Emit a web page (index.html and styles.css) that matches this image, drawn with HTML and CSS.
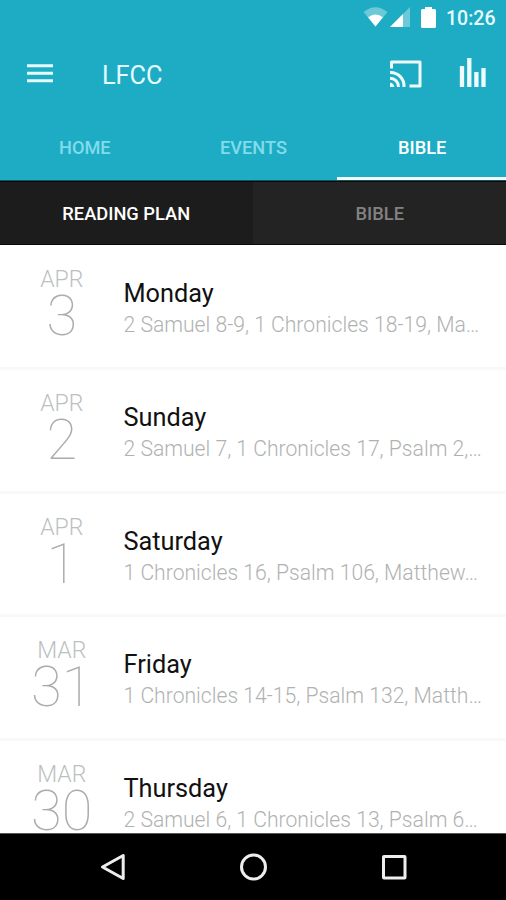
FILE: index.html
```html
<!DOCTYPE html>
<html lang="en">
<head>
<meta charset="utf-8">
<title>LFCC</title>
<link rel="stylesheet" href="styles.css">
</head>
<body>
<div class="screen">
  <header class="header">
    <div class="status">
      <svg class="wifi" width="25" height="20" viewBox="0 0 25 20"><path d="M.5 5Q12.5-4.500 24.500 5L12.500 19.500z" fill="#fff" opacity=".35"/><path d="M5 10.200Q12.500 5 20 10.200L12.500 19.500z" fill="#fff"/></svg>
      <svg class="signal" width="21" height="20" viewBox="0 0 21 20"><path d="M0 20L20 0V20z" fill="#fff" opacity=".35"/><path d="M0 20L13 7V20z" fill="#fff"/></svg>
      <svg class="battery" width="15" height="21" viewBox="0 0 15 21"><path d="M1.500 2H4V0h7v2h2.500q1.500 0 1.500 1.500v16q0 1.500-1.500 1.500h-12Q0 21 0 19.500v-16Q0 2 1.500 2z" fill="#fff"/></svg>
      <span class="clock">10:26</span>
    </div>
    <div class="toolbar">
      <svg class="menu" width="26" height="20" viewBox="0 0 26 20"><path d="M0 1.700h26M0 9.200h26M0 16.700h26" stroke="#e6fbff" stroke-width="3"/></svg>
      <h1 class="title">LFCC</h1>
      <svg class="cast" width="34" height="28" viewBox="0 0 34 28" fill="none" stroke="#effcff" stroke-width="3" stroke-linejoin="round"><path d="M2.500 8.500V2H31v24H20.500"/><path d="M1 12.500A13.500 13.500 0 0 1 15 27M1 18.200A8.500 8.500 0 0 1 9.500 27"/><path d="M1 22.700A4.300 4.300 0 0 1 5.300 27H1z" fill="#effcff" stroke="none"/></svg>
      <svg class="bars" width="28" height="30" viewBox="0 0 28 30"><path d="M3 8v21M10.300 0v29M17.400 14v15M24.500 10v19" stroke="#effcff" stroke-width="4.300"/></svg>
    </div>
    <nav class="tabs">
      <a class="tab">HOME</a>
      <a class="tab">EVENTS</a>
      <a class="tab tab-active">BIBLE</a>
    </nav>
  </header>
  <nav class="subtabs">
    <a class="subtab subtab-active">READING PLAN</a>
    <a class="subtab">BIBLE</a>
  </nav>
  <main class="list">
    <article class="row">
      <div class="date"><span class="month">APR</span><span class="num">3</span></div>
      <div class="info"><h2 class="day">Monday</h2><p class="text">2 Samuel 8-9, 1 Chronicles 18-19, Ma…</p></div>
    </article>
    <article class="row">
      <div class="date"><span class="month">APR</span><span class="num">2</span></div>
      <div class="info"><h2 class="day">Sunday</h2><p class="text">2 Samuel 7, 1 Chronicles 17, Psalm 2,…</p></div>
    </article>
    <article class="row">
      <div class="date"><span class="month">APR</span><span class="num">1</span></div>
      <div class="info"><h2 class="day">Saturday</h2><p class="text">1 Chronicles 16, Psalm 106, Matthew…</p></div>
    </article>
    <article class="row">
      <div class="date"><span class="month">MAR</span><span class="num">31</span></div>
      <div class="info"><h2 class="day">Friday</h2><p class="text">1 Chronicles 14-15, Psalm 132, Matth…</p></div>
    </article>
    <article class="row">
      <div class="date"><span class="month">MAR</span><span class="num">30</span></div>
      <div class="info"><h2 class="day">Thursday</h2><p class="text">2 Samuel 6, 1 Chronicles 13, Psalm 6…</p></div>
    </article>
  </main>
  <footer class="navbar">
    <svg width="28" height="30" viewBox="0 0 28 30"><path d="M24.200 3.500v23L3.500 15z" fill="none" stroke="#eee" stroke-width="3" stroke-linejoin="round"/></svg>
    <svg width="28" height="30" viewBox="0 0 28 30"><circle cx="13.500" cy="15" r="12" fill="none" stroke="#eee" stroke-width="3"/></svg>
    <svg width="28" height="30" viewBox="0 0 28 30"><rect x="3.500" y="4.500" width="21.500" height="21.500" rx=".5" fill="none" stroke="#eee" stroke-width="3"/></svg>
  </footer>
</div>
</body>
</html>
```
FILE: styles.css
```css
* { box-sizing: border-box; margin: 0; padding: 0; }
body { font-family: Roboto, "Liberation Sans", sans-serif; background: #fff; }
.screen { width: 506px; height: 900px; display: flex; flex-direction: column; overflow: hidden; }
svg { display: block; flex: none; }
.header { height: 181px; flex: none; background: #1dacc3; border-bottom: 1px solid #0b5966; }
.status { height: 34px; display: flex; align-items: flex-start; justify-content: flex-end; padding: 7px 11px 0 0; }
.wifi { margin-right: 2px; }
.signal { margin-right: 10px; }
.battery { margin-right: 10px; }
.clock { font-size: 19.500px; line-height: 23px; font-weight: 500; color: #e6fbff; width: 49px; white-space: nowrap; }
.toolbar { height: 79px; display: flex; align-items: center; padding: 0 19px 0 27px; }
.title { margin-left: 49px; flex: 1; font-size: 25.300px; line-height: 30px; font-weight: 400; color: #e6fbff; padding-top: 4px; }
.cast { margin-right: 36px; }
.bars { margin-bottom: 1px; }
.tabs { height: 67px; display: flex; }
.tab { flex: 1; padding: 4px 0 0 1px; display: flex; align-items: center; justify-content: center; font-size: 18.200px; font-weight: 500; color: #80dceb; border-bottom: 3px solid transparent; }
.tab-active { color: #fff; border-bottom-color: #effcff; }
.subtabs { height: 64px; flex: none; display: flex; border-top: 1px solid #050505; border-bottom: 1px solid #0a0a0a; }
.subtab { flex: 1; display: flex; align-items: center; justify-content: center; padding: 1px 0 0 1px; font-size: 18.300px; font-weight: 500; color: #828282; background: #232323; }
.subtab-active { color: #fff; background: #1c1c1c; padding-left: 0; }
.list { flex: 1; min-height: 0; overflow: hidden; padding-top: 1px; }
.row { height: 123.750px; display: flex; border-bottom: 3px solid #f9f9f9; }
.date { width: 123.500px; display: flex; flex-direction: column; align-items: center; padding-top: 20px; color: #bcbfbf; }
.month { font-size: 23px; line-height: 27px; font-weight: 300; }
.num { font-size: 56px; line-height: 46px; font-weight: 100; color: #a9adad; }
.info { padding-top: 32px; }
.day { font-size: 25.300px; line-height: 31px; font-weight: 400; color: #111; }
.text { font-size: 21.150px; line-height: 31px; font-weight: 300; color: #b0b2b2; white-space: nowrap; }
.navbar { height: 67px; flex: none; background: #000; border-top: 1px solid #555; display: flex; align-items: center; justify-content: space-between; padding: 0 98px 0 99px; }
```
